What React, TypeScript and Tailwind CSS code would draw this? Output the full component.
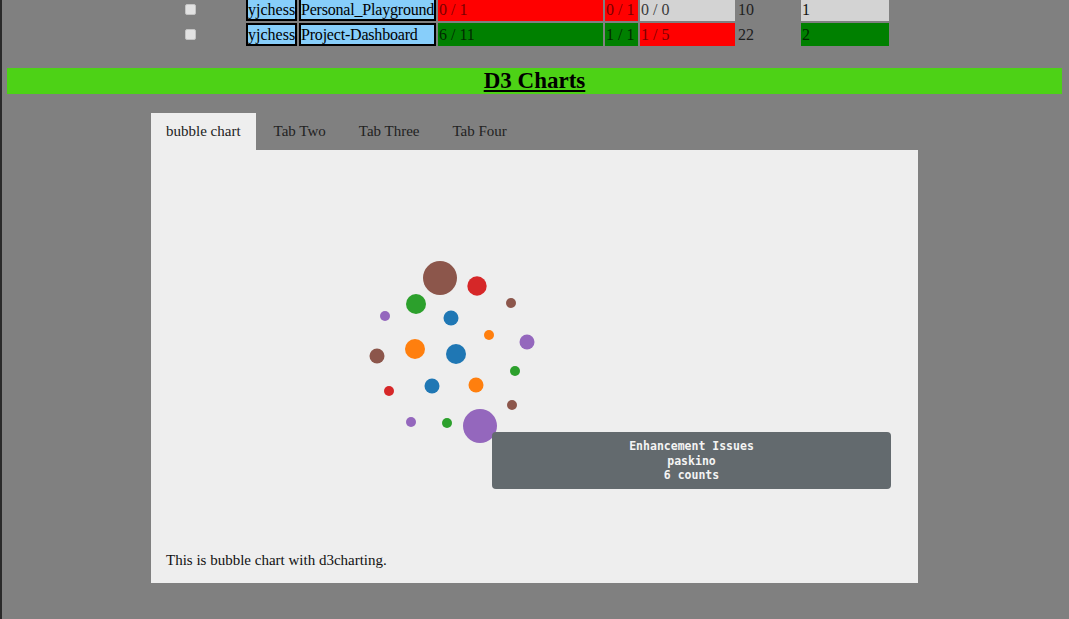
import React from "react";

type Row = {
  owner: string;
  repo: string;
  cells: { text: string; bg: string; w: string }[];
};

const rows: Row[] = [
  {
    owner: "yjchess",
    repo: "Personal_Playground",
    cells: [
      { text: "0 / 1", bg: "bg-[#ff0000] text-[#7a0000]", w: "w-[165px]" },
      { text: "0 / 1", bg: "bg-[#ff0000] text-[#7a0000]", w: "w-[33px]" },
      { text: "0 / 0", bg: "bg-[#d3d3d3] text-[#3a3a3a]", w: "w-[95px]" },
      { text: "10", bg: "text-[#1e1e1e]", w: "w-[62px]" },
      { text: "1", bg: "bg-[#d3d3d3] text-[#111]", w: "w-[88px]" },
    ],
  },
  {
    owner: "yjchess",
    repo: "Project-Dashboard",
    cells: [
      { text: "6 / 11", bg: "bg-[#008000] text-[#002a00]", w: "w-[165px]" },
      { text: "1 / 1", bg: "bg-[#008000] text-[#002a00]", w: "w-[33px]" },
      { text: "1 / 5", bg: "bg-[#ff0000] text-[#7a0000]", w: "w-[95px]" },
      { text: "22", bg: "text-[#1e1e1e]", w: "w-[62px]" },
      { text: "2", bg: "bg-[#008000] text-[#002a00]", w: "w-[88px]" },
    ],
  },
];

// d3 category10
const bubbles = [
  { x: 440, y: 278, r: 17, c: "#8c564b" },
  { x: 477, y: 286, r: 9.7, c: "#d62728" },
  { x: 416, y: 304, r: 10, c: "#2ca02c" },
  { x: 511, y: 303, r: 5, c: "#8c564b" },
  { x: 385, y: 316, r: 5, c: "#9467bd" },
  { x: 451, y: 318, r: 7.5, c: "#1f77b4" },
  { x: 489, y: 335, r: 5, c: "#ff7f0e" },
  { x: 527, y: 342, r: 7.5, c: "#9467bd" },
  { x: 377, y: 356, r: 7.5, c: "#8c564b" },
  { x: 415, y: 349, r: 10, c: "#ff7f0e" },
  { x: 456, y: 354, r: 10, c: "#1f77b4" },
  { x: 515, y: 371, r: 5, c: "#2ca02c" },
  { x: 389, y: 391, r: 5, c: "#d62728" },
  { x: 432, y: 386, r: 7.5, c: "#1f77b4" },
  { x: 476, y: 385, r: 7.5, c: "#ff7f0e" },
  { x: 512, y: 405, r: 5, c: "#8c564b" },
  { x: 411, y: 422, r: 5, c: "#9467bd" },
  { x: 447, y: 423, r: 5, c: "#2ca02c" },
  { x: 480, y: 426, r: 17, c: "#9467bd" },
];

const serif = "font-['Liberation_Serif','Times_New_Roman',serif]";

export default function App() {
  return (
    <div
      className={`min-h-[619px] bg-[#808080] border-l-2 border-[#2a2a2a] overflow-hidden ${serif}`}
    >
      {/* repo table, scrolled so the top row is cut off */}
      <div className="mt-[-2px] flex flex-col gap-[2px] text-[16px] leading-[19px]">
        {rows.map((row, i) => (
          <div key={i} className="flex gap-[2px] h-[23px] ml-[134px]">
            <div className="w-[108px] flex items-center justify-center">
              <span className="block w-[11px] h-[11px] bg-[#e2e2e2] border border-[#c4c4c4] rounded-[2px]" />
            </div>
            <div className="w-[51px] bg-[#87cefa] border-2 border-black text-black flex items-center">
              {row.owner}
            </div>
            <div className="w-[137px] bg-[#87cefa] border-2 border-black text-black flex items-center whitespace-nowrap tracking-[-0.2px] overflow-hidden">
              {row.repo}
            </div>
            {row.cells.map((c, j) => (
              <div
                key={j}
                className={`${c.w} ${c.bg} flex items-center pl-[1px] whitespace-nowrap`}
              >
                {c.text}
              </div>
            ))}
          </div>
        ))}
      </div>

      <div className="mt-[22px] ml-[5px] mr-[7px] h-[26px] bg-[#4dd216] flex items-center justify-center">
        <h2 className="text-[23px] font-bold underline leading-[26px] text-black">
          D3 Charts
        </h2>
      </div>

      <div className="mt-[19px] w-[767px] ml-[149px]">
        <div className="flex gap-[3px] text-[15px] text-[#222]">
          <div className="h-[37px] px-[15px] bg-[#eeeeee] flex items-center">
            bubble chart
          </div>
          <div className="h-[37px] px-[15px] flex items-center">Tab Two</div>
          <div className="h-[37px] px-[15px] flex items-center">Tab Three</div>
          <div className="h-[37px] px-[15px] flex items-center">Tab Four</div>
        </div>

        <div className="relative bg-[#eeeeee] px-[15px] pt-[15px] pb-[14px]">
          <div className="h-[386px]">
            <svg width="737" height="386" viewBox="166 165 737 386">
              {bubbles.map((b, i) => (
                <circle key={i} cx={b.x} cy={b.y} r={b.r} fill={b.c} />
              ))}
            </svg>
          </div>
          <p className="text-[15px] leading-[18px] text-[#111]">
            This is bubble chart with d3charting.
          </p>

          <div className="absolute left-[341px] top-[282px] w-[399px] h-[57px] rounded-[4px] bg-[#636a6e] pt-[7px] text-center text-[11.5px] leading-[14.5px] font-bold text-[#f4f4f4] font-['DejaVu_Sans_Mono','Liberation_Mono',monospace]">
            <div>Enhancement Issues</div>
            <div>paskino</div>
            <div>6 counts</div>
          </div>
        </div>
      </div>
    </div>
  );
}
